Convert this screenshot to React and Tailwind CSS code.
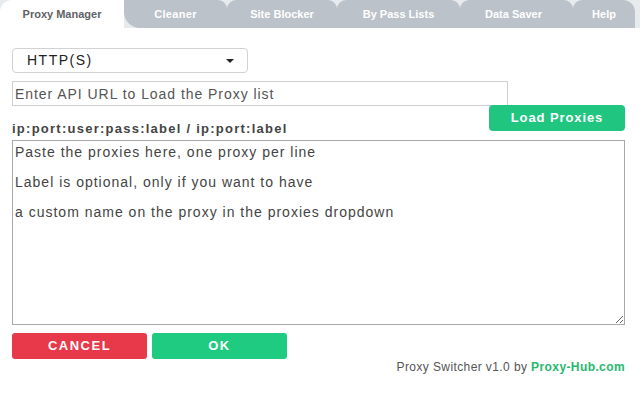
import React from "react";

function Tab({ label, className }) {
  return (
    <div className={"flex h-full shrink-0 items-center justify-center text-[11px] font-bold text-white bg-[#bcc2c9] " + className}>
      {label}
    </div>
  );
}

export default function App() {
  return (
    <div className="w-[640px] h-[400px] overflow-hidden bg-white font-['Liberation_Sans',Arial,sans-serif]">
      {/* tab bar */}
      <div className="flex h-[28px] bg-[#e8ebee]">
        <div className="flex h-full w-[124px] shrink-0 items-center justify-center rounded-tl-[12px] bg-white text-[11px] font-bold text-[#5f6266]">
          Proxy Manager
        </div>
        <Tab label="Cleaner" className="w-[103px] rounded-bl-[16px] rounded-tr-[9px] tracking-[0.3px]" />
        <Tab label="Site Blocker" className="w-[110px] rounded-tl-[9px] rounded-tr-[9px]" />
        <Tab label="By Pass Lists" className="w-[123px] rounded-tl-[9px] rounded-tr-[9px]" />
        <Tab label="Data Saver" className="w-[113px] rounded-tl-[9px] rounded-tr-[9px] pr-[6px]" />
        <Tab label="Help" className="w-[62px] rounded-tl-[9px] rounded-tr-[12px]" />
      </div>

      {/* content */}
      <div className="pl-[12px] pr-[15px] pt-[20px]">
        <div className="flex h-[25px] w-[236px] items-center justify-between rounded-[4px] border border-[#d2d2d2] pl-[14px] pr-[13px] text-[14px] tracking-[1.5px] text-[#222]">
          <span>HTTP(S)</span>
          <svg width="8" height="4" viewBox="0 0 8 4">
            <path d="M0 0 L8 0 L4 4 Z" fill="#222" />
          </svg>
        </div>

        <input
          className="mt-[8px] block h-[25px] w-[496px] border border-[#cfcfcf] px-[2px] text-[14px] tracking-[0.95px] text-[#333] outline-none placeholder:text-[#555]"
          placeholder="Enter API URL to Load the Proxy list"
        />

        <div className="mt-[-1px] flex h-[29px] justify-between">
          <div className="self-end mb-[-2px] text-[13px] leading-[15px] font-bold tracking-[1.25px] text-[#444]">
            ip:port:user:pass:label / ip:port:label
          </div>
          <button className="flex h-[26px] w-[136px] items-center justify-center self-start rounded-[4px] bg-[#20c580] text-[13px] font-bold tracking-[0.9px] text-white">
            Load Proxies
          </button>
        </div>

        <textarea
          className="mt-[6px] block h-[185px] w-full border border-[#a9a9a9] px-[2px] py-[4px] text-[14px] leading-[15px] tracking-[1px] text-[#333] outline-none placeholder:text-[#444]"
          placeholder={"Paste the proxies here, one proxy per line\n\nLabel is optional, only if you want to have\n\na custom name on the proxy in the proxies dropdown"}
        />

        <div className="mt-[8px] flex gap-[5px]">
          <button className="flex h-[26px] w-[135px] items-center justify-center rounded-[3px] bg-[#e8394b] text-[13px] font-bold tracking-[1.5px] text-white">
            CANCEL
          </button>
          <button className="flex h-[26px] w-[135px] items-center justify-center rounded-[3px] bg-[#1fca81] text-[13px] font-bold tracking-[1.5px] text-white">
            OK
          </button>
        </div>

        <div className="text-right text-[12px] leading-[16px] tracking-[0.4px] text-[#555]">
          Proxy Switcher v1.0 by <span className="font-bold text-[#27b86f]">Proxy-Hub.com</span>
        </div>
      </div>
    </div>
  );
}
